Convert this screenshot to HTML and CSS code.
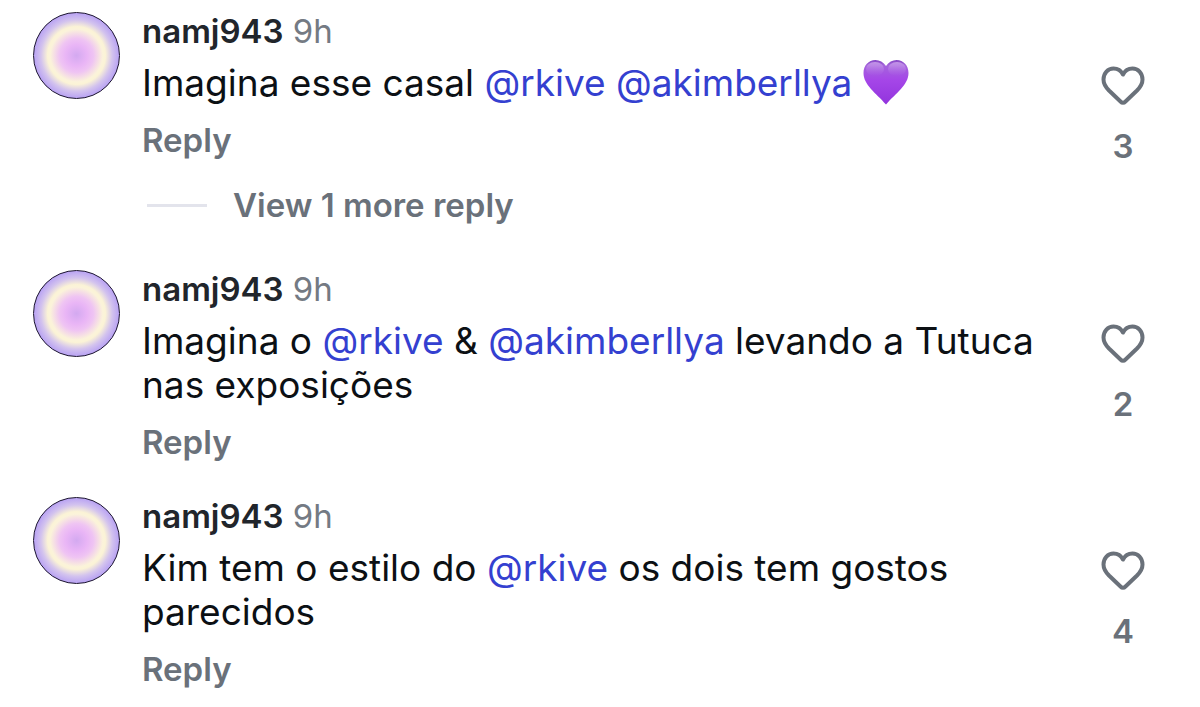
FILE: index.html
```html
<!DOCTYPE html>
<html lang="pt">
<head>
    <meta charset="UTF-8">
    <meta name="viewport" content="width=device-width, initial-scale=1.0">
    <title>Comments</title>
    <link rel="stylesheet" href="styles.css">
</head>
<body>
    <main class="comments">
        <article class="comment">
            <div class="avatar"></div>
            <div class="content">
                <div class="meta"><a class="username" href="#">namj943</a> <span class="time">9h</span></div>
                <p class="text">Imagina esse casal <a href="#">@rkive</a> <a href="#">@akimberllya</a> <svg class="emoji" viewBox="0 0 46 46" role="img" aria-label="purple heart">
                    <defs>
                        <linearGradient id="purple" x1="0" y1="0" x2="0" y2="1">
                            <stop offset="0" stop-color="#8545c4"/>
                            <stop offset="0.12" stop-color="#a565dc"/>
                            <stop offset="0.45" stop-color="#a546e8"/>
                            <stop offset="1" stop-color="#9234dd"/>
                        </linearGradient>
                        <linearGradient id="shine" x1="0" y1="0" x2="0" y2="1">
                            <stop offset="0" stop-color="#d0a8ee" stop-opacity="0.8"/>
                            <stop offset="1" stop-color="#b873ea" stop-opacity="0"/>
                        </linearGradient>
                    </defs>
                    <path fill="url(#purple)" d="M23 7C20.500 3 16.500 1 12.500 1C5.500 1 0.500 6.500 0.500 14C0.500 26 13 34 23 45.500C33 34 45.500 26 45.500 14C45.500 6.500 40.500 1 33.500 1C29.500 1 25.500 3 23 7Z"/>
                    <ellipse cx="12" cy="10" rx="9" ry="7" fill="url(#shine)"/>
                    <ellipse cx="34" cy="10" rx="9" ry="7" fill="url(#shine)"/>
                </svg></p>
                <button class="reply" type="button">Reply</button>
                <button class="more" type="button">View 1 more reply</button>
            </div>
            <div class="likes">
                <button class="like" type="button" aria-label="Like">
                    <svg viewBox="0 0 44 40"><path d="M22 8.500C20 4.500 16.500 2.500 12.500 2.500C7 2.500 2.500 7 2.500 13.500C2.500 18 4.500 21 8 24.500L19.500 35.500Q22 38 24.500 35.500L36 24.500C39.500 21 41.500 18 41.500 13.500C41.500 7 37 2.500 31.500 2.500C27.500 2.500 24 4.500 22 8.500Z"/></svg>
                </button>
                <span class="count">3</span>
            </div>
        </article>

        <article class="comment">
            <div class="avatar"></div>
            <div class="content">
                <div class="meta"><a class="username" href="#">namj943</a> <span class="time">9h</span></div>
                <p class="text">Imagina o <a href="#">@rkive</a> &amp; <a href="#">@akimberllya</a> levando a Tutuca nas exposições</p>
                <button class="reply" type="button">Reply</button>
            </div>
            <div class="likes">
                <button class="like" type="button" aria-label="Like">
                    <svg viewBox="0 0 44 40"><path d="M22 8.500C20 4.500 16.500 2.500 12.500 2.500C7 2.500 2.500 7 2.500 13.500C2.500 18 4.500 21 8 24.500L19.500 35.500Q22 38 24.500 35.500L36 24.500C39.500 21 41.500 18 41.500 13.500C41.500 7 37 2.500 31.500 2.500C27.500 2.500 24 4.500 22 8.500Z"/></svg>
                </button>
                <span class="count">2</span>
            </div>
        </article>

        <article class="comment">
            <div class="avatar"></div>
            <div class="content">
                <div class="meta"><a class="username" href="#">namj943</a> <span class="time">9h</span></div>
                <p class="text">Kim tem o estilo do <a href="#">@rkive</a> os dois tem gostos parecidos</p>
                <button class="reply" type="button">Reply</button>
            </div>
            <div class="likes">
                <button class="like" type="button" aria-label="Like">
                    <svg viewBox="0 0 44 40"><path d="M22 8.500C20 4.500 16.500 2.500 12.500 2.500C7 2.500 2.500 7 2.500 13.500C2.500 18 4.500 21 8 24.500L19.500 35.500Q22 38 24.500 35.500L36 24.500C39.500 21 41.500 18 41.500 13.500C41.500 7 37 2.500 31.500 2.500C27.500 2.500 24 4.500 22 8.500Z"/></svg>
                </button>
                <span class="count">4</span>
            </div>
        </article>
    </main>
</body>
</html>
```
FILE: styles.css
```css
body {
    margin: 0;
    background-color: #fff;
    color: #0c1014;
    font-family: Inter, "Liberation Sans", sans-serif;
    font-size: 33px;
    line-height: 38px;
}
a {
    color: #3440d0;
    text-decoration: none;
}
button {
    display: block;
    padding: 0;
    border: none;
    background: none;
    color: #6a717a;
    font: inherit;
    font-weight: 600;
    cursor: pointer;
}
.comments {
    display: flex;
    flex-direction: column;
    gap: 36px;
    padding: 12px 55px 12px 33px;
}
.comment {
    display: flex;
    align-items: flex-start;
}
.avatar {
    box-sizing: border-box;
    flex: none;
    width: 87px;
    height: 87px;
    border: 1px solid #1c1530;
    border-radius: 50%;
    background: radial-gradient(circle closest-side, #d3a9f0 0%, #e9b5f6 25%, #efc4f3 40%, #fbf3da 62%, #fbf3d6 68%, #d3c3ee 84%, #b9a3f3 100%);
}
.content {
    flex: 1;
    margin: 0 40px 0 22px;
}
.username {
    color: #21252b;
    font-weight: 600;
}
.time {
    color: #747a83;
}
.text {
    margin: 11px 0 16px;
    font-size: 37px;
    line-height: 44px;
}
.emoji {
    width: 46px;
    height: 46px;
    margin-top: -2px;
    vertical-align: top;
}
.more {
    display: flex;
    align-items: center;
    gap: 26px;
    margin: 27px 0 10px 5px;
}
.more::before {
    content: "";
    width: 60px;
    height: 3px;
    background-color: #e3e4ec;
}
.likes {
    display: flex;
    flex: none;
    flex-direction: column;
    align-items: center;
    gap: 21px;
    padding-top: 54px;
}
.like svg {
    display: block;
    width: 44px;
    height: 40px;
    fill: none;
    stroke: #6a717a;
    stroke-width: 4;
    stroke-linejoin: round;
}
.count {
    color: #6a717a;
    font-weight: 600;
}
```
